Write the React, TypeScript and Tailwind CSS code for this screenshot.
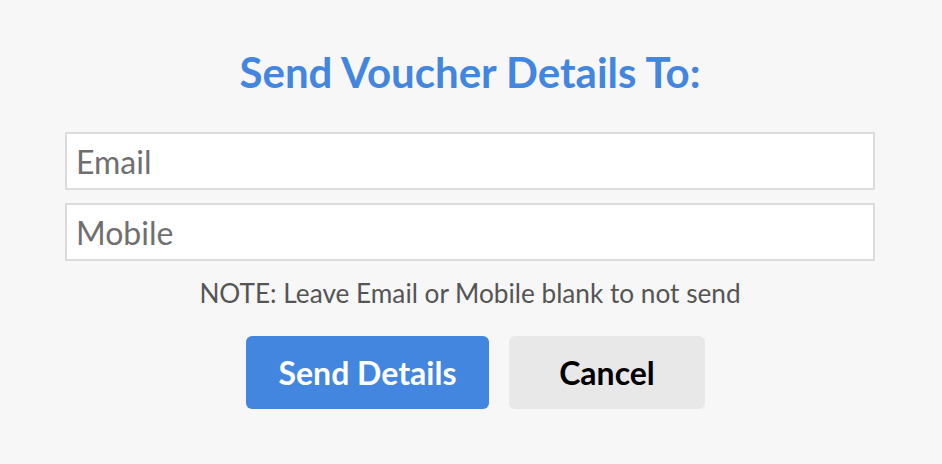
export default function App() {
  return (
    <div className="min-h-screen w-full bg-[#f7f7f7] font-['Lato',sans-serif]">
      <div className="flex flex-col items-center pl-[65px] pr-[67px] pt-[47px]">
        <h1 className="text-[42px] font-bold leading-[50px] text-[#4286df]">Send Voucher Details To:</h1>
        <div className="mt-[35px] flex w-full flex-col gap-[13px]">
          <input
            type="text"
            placeholder="Email"
            className="h-[58px] w-full border-2 border-[#dcdcdc] bg-white px-[9px] text-[32px] text-[#555] outline-none placeholder:text-[#6f6f6f]"
          />
          <input
            type="text"
            placeholder="Mobile"
            className="h-[58px] w-full border-2 border-[#dcdcdc] bg-white px-[9px] text-[32px] text-[#555] outline-none placeholder:text-[#6f6f6f]"
          />
        </div>
        <p className="mt-[17px] text-[26.2px] leading-[30px] text-[#555]">NOTE: Leave Email or Mobile blank to not send</p>
        <div className="ml-[11px] mt-[28px] flex gap-[20px]">
          <button className="h-[73px] w-[243px] rounded-[6px] bg-[#4286df] text-[32px] font-bold text-white">
            Send Details
          </button>
          <button className="h-[73px] w-[196px] rounded-[6px] bg-[#e8e8e8] text-[32px] font-bold text-black">
            Cancel
          </button>
        </div>
      </div>
    </div>
  );
}
